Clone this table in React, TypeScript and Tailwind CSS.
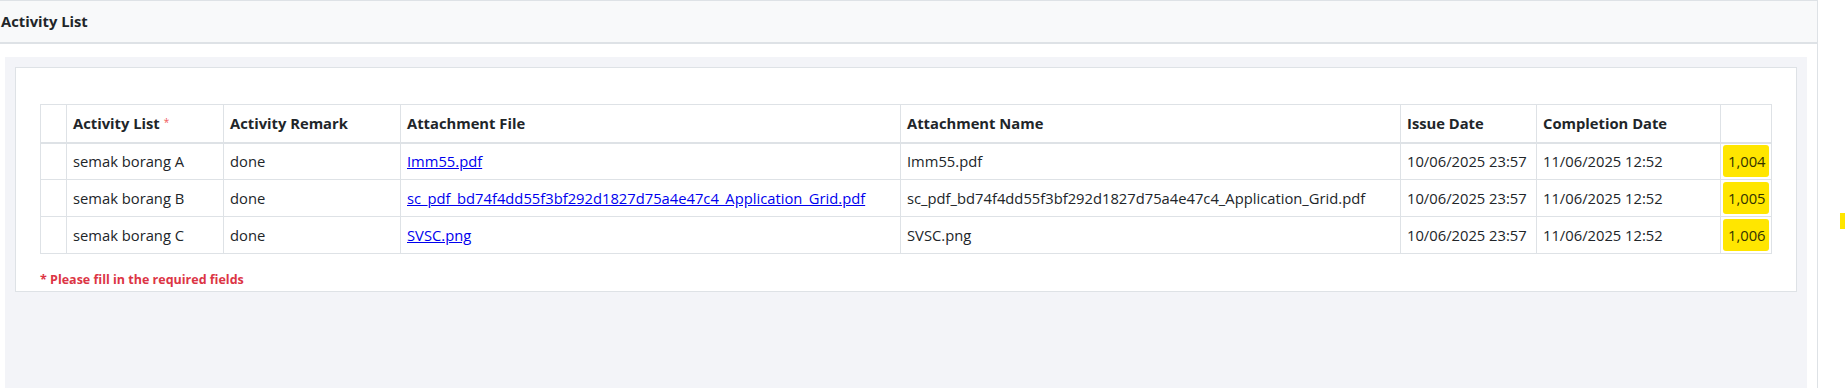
const rows = [
  {
    activity: "semak borang A",
    remark: "done",
    file: "Imm55.pdf",
    issue: "10/06/2025 23:57",
    completion: "11/06/2025 12:52",
    no: "1,004",
  },
  {
    activity: "semak borang B",
    remark: "done",
    file: "sc_pdf_bd74f4dd55f3bf292d1827d75a4e47c4_Application_Grid.pdf",
    issue: "10/06/2025 23:57",
    completion: "11/06/2025 12:52",
    no: "1,005",
  },
  {
    activity: "semak borang C",
    remark: "done",
    file: "SVSC.png",
    issue: "10/06/2025 23:57",
    completion: "11/06/2025 12:52",
    no: "1,006",
  },
];

const th = "border border-[#dee2e6] border-b-2 h-[38px] px-1.5 text-left font-bold align-middle";
const td = "border border-[#dee2e6] h-[37px] px-1.5 align-middle";

export default function App() {
  return (
    <div
      className="flex h-[388px] w-[1845px] bg-white text-[14.75px] text-[#212529]"
      style={{ fontFamily: '"Open Sans", "Noto Sans", sans-serif' }}
    >
      <div className="flex w-[1818px] flex-col border-r border-[#dee2e6]">
        <div className="flex h-[44px] items-center border-t border-b-2 border-[#dee2e6] bg-[#f8f9fa] pl-[1px] font-bold">
          Activity List
        </div>

        <div className="mt-[13px] ml-[5px] mr-[10px] flex-1 bg-[#f3f4f8] p-[10px]">
          <div className="border border-[#dee2e6] bg-white px-[24px] pt-[36px] pb-[1px]">
            <table className="table-fixed border-collapse">
              <colgroup>
                <col className="w-[26px]" />
                <col className="w-[157px]" />
                <col className="w-[177px]" />
                <col className="w-[500px]" />
                <col className="w-[500px]" />
                <col className="w-[136px]" />
                <col className="w-[184px]" />
                <col className="w-[51px]" />
              </colgroup>
              <thead>
                <tr>
                  <th className={th}></th>
                  <th className={th}>
                    Activity List
                    <sup className="relative -top-[3px] ml-[4px] text-[10px] font-normal text-[#f05a5a]">*</sup>
                  </th>
                  <th className={th}>Activity Remark</th>
                  <th className={th}>Attachment File</th>
                  <th className={th}>Attachment Name</th>
                  <th className={th}>Issue Date</th>
                  <th className={th}>Completion Date</th>
                  <th className={th}></th>
                </tr>
              </thead>
              <tbody>
                {rows.map((r) => (
                  <tr key={r.no}>
                    <td className={td}></td>
                    <td className={td}>{r.activity}</td>
                    <td className={td}>{r.remark}</td>
                    <td className={td}>
                      <a href="#" className="text-[#0000ee] underline">
                        {r.file}
                      </a>
                    </td>
                    <td className={td}>{r.file}</td>
                    <td className={td}>{r.issue}</td>
                    <td className={td}>{r.completion}</td>
                    <td className="h-[37px] border border-[#dee2e6] p-0 align-middle">
                      <div className="mx-[2px] flex h-[32px] items-center rounded-[3px] bg-[#ffe600] pl-[5px] text-[#333300]">
                        {r.no}
                      </div>
                    </td>
                  </tr>
                ))}
              </tbody>
            </table>

            <p className="mt-[17px] text-[12.5px] font-bold text-[#dc3545]">
              * Please fill in the required fields
            </p>
          </div>
        </div>
      </div>

      <div className="flex-1 pt-[213px]">
        <div className="ml-auto h-[16px] w-[5px] bg-[#ffe600]"></div>
      </div>
    </div>
  );
}
